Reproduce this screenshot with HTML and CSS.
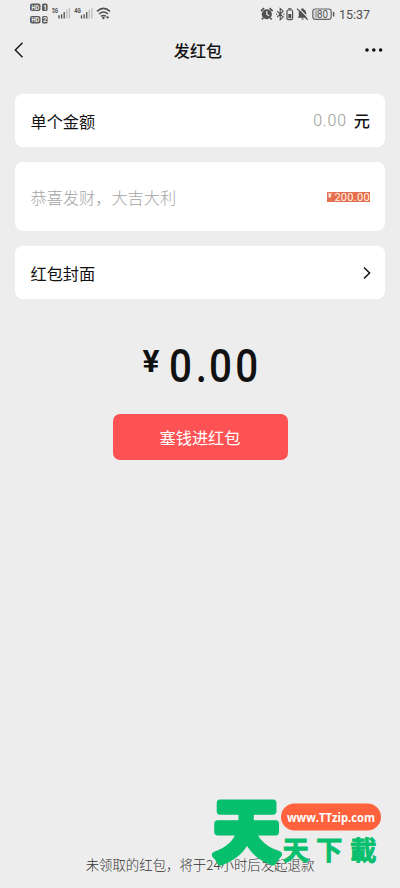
FILE: index.html
```html
<!DOCTYPE html>
<html lang="zh-CN">
<head>
<meta charset="utf-8">
<meta name="viewport" content="width=device-width, initial-scale=1">
<title>发红包</title>
<link rel="stylesheet" href="styles.css">
</head>
<body>
<div class="screen">
  <header class="status">
    <svg class="status-left" width="84" height="26" viewBox="0 0 84 26">
      <g fill="#5b5b5b">
        <rect x="0" y="3.4" width="10.5" height="7.6" rx="2"/><rect x="12" y="3.4" width="5.6" height="7.6" rx="1.6"/>
        <rect x="0" y="16" width="10.5" height="7.6" rx="2"/><rect x="12" y="16" width="5.6" height="7.6" rx="1.6"/>
      </g>
      <g class="hd">
        <text x="1.4" y="9.7" textLength="7.8" lengthAdjust="spacingAndGlyphs">HD</text><text x="13" y="9.7">1</text>
        <text x="1.4" y="22.3" textLength="7.8" lengthAdjust="spacingAndGlyphs">HD</text><text x="13" y="22.3">2</text>
      </g>
      <g class="net"><text x="22" y="12.6" textLength="6" lengthAdjust="spacingAndGlyphs">5G</text><text x="44.3" y="12.6" textLength="6.6" lengthAdjust="spacingAndGlyphs">4G</text></g>
      <g stroke="#505050" stroke-width="1.3">
        <path d="M29 18.5v-3.2M31.6 18.5v-4.3M34.2 18.5v-6.5M51.5 18.5v-3.2M54.1 18.5v-4.3M56.7 18.5v-6.5"/>
        <path stroke="#bdbdbd" d="M36.8 18.5v-9M39.4 18.5v-10.5M59.3 18.5v-9M61.9 18.5v-10.5"/>
      </g>
      <g fill="none" stroke="#505050" stroke-width="1.5">
        <path d="M67 11.4q6.5-6 13 0M69 14q4.5-4 9 0M71 16.4q2.5-2 5 0"/>
      </g>
      <circle cx="73.4" cy="18" r="1.2" fill="#505050"/><path d="M76 17.3l1.6-1.4 1.6 1.4-1.6 1.4z" fill="#505050"/>
    </svg>
    <div class="status-right">
      <svg width="76" height="18" viewBox="0 0 76 18">
        <circle cx="6.8" cy="9.2" r="5" fill="#505050"/><path d="M1 6.2l3-3M12.6 6.2l-3-3M3.2 13l-1.3 1.5M10.4 13l1.3 1.5" stroke="#505050" stroke-width="1.7"/><path d="M6.8 6v3.5l2.4 1.3" fill="none" stroke="#ededed" stroke-width="1.2"/>
        <path d="M17.2 6.2l6 5.8-3 2.8V3.4l3 2.8-6 5.8M16 9.1h1M23.5 9.1h1" fill="none" stroke="#505050" stroke-width="1.1"/>
        <rect x="27" y="5" width="5.6" height="9.6" rx="1.3" fill="none" stroke="#505050" stroke-width="1.2"/><path d="M28.2 3.8h3.2" stroke="#505050" stroke-width="1.2"/><path d="M28.3 9h3v4.2h-3z" fill="#505050"/>
        <path d="M37.5 12.8l1.3-1.6V8q0-3 2.6-3.7 0-1.1 1.1-1.1t1.1 1.1Q46.2 5 46.2 8v3.2l1.3 1.6zM41 13.5h3l-1.5 1.4z" fill="#505050"/><path d="M38.2 2.600l10.600 11" stroke="#ededed" stroke-width="1.2"/><path d="M37 3.600l10.800 11.200" stroke="#505050" stroke-width="1.2"/>
        <rect x="52.8" y="4" width="18.4" height="10.3" rx="2.5" fill="none" stroke="#626262" stroke-width="1.2"/><path d="M54.6 5.600h3v7.200h-3z" fill="#b0b0b0"/><path d="M73.6 7v4.500" stroke="#505050" stroke-width="1.4"/>
        <text class="battery" x="57" y="12.6" textLength="11" lengthAdjust="spacingAndGlyphs">80</text>
      </svg>
      <span class="time">15:37</span>
    </div>
  </header>
  <nav class="nav">
    <svg width="10" height="16" viewBox="0 0 10 16"><path d="M8.5 .8L1.3 8l7.2 7.2" fill="none" stroke="#151515" stroke-width="1.4"/></svg>
    <h1>发红包</h1>
    <svg width="18" height="6" viewBox="0 0 18 6" fill="#111"><circle cx="2" cy="3" r="1.8"/><circle cx="8.8" cy="3" r="1.8"/><circle cx="15.6" cy="3" r="1.8"/></svg>
  </nav>
  <main>
    <section class="card amount-row"><span>单个金额</span><span class="value"><span class="zero">0.00</span><span class="unit">元</span></span></section>
    <section class="card wish"><span>恭喜发财，大吉大利</span><span class="tag"><i>¥</i><span>200.00</span></span></section>
    <section class="card cover"><span>红包封面</span><svg width="8" height="14" viewBox="0 0 8 14"><path d="M1 1.5L6.600 7 1 12.5" fill="none" stroke="#111" stroke-width="1.5"/></svg></section>
    <svg class="total" width="120" height="60" viewBox="0 0 120 60">
      <text class="yen" x="2.5" y="36" textLength="17" lengthAdjust="spacingAndGlyphs">¥</text>
      <text class="sum" transform="translate(29 45.5) scale(.86 1)" x="0 31 46.500 77">0.00</text>
    </svg>
    <button class="send">塞钱进红包</button>
  </main>
  <footer>未领取的红包，将于24小时后发起退款</footer>
  <div class="watermark">
    <svg width="176" height="78" viewBox="0 0 176 78">
      <text class="mark-big" transform="translate(4.5 61) scale(.99 1)">天</text>
      <rect x="72" y="8.5" width="100" height="27" rx="13.5" fill="#ff623c"/>
      <text class="mark-url" x="78" y="26.5" textLength="88" lengthAdjust="spacingAndGlyphs">www.TTzip.com</text>
      <g class="mark-name"><text x="73.5" y="65">天</text><text x="107" y="65">下</text><text x="141" y="65">載</text></g>
    </svg>
  </div>
</div>
</body>
</html>
```
FILE: styles.css
```css
* { box-sizing: border-box; }
body { margin: 0; background: #ededed; font-family: "Noto Sans CJK SC", sans-serif; color: #111; }
.screen { position: relative; width: 400px; height: 888px; display: flex; flex-direction: column; overflow: hidden; }
.status { height: 28px; display: flex; justify-content: space-between; padding: 0 30px; }
.status-right { display: flex; align-items: flex-start; padding-top: 5px; }
.hd { font: bold 7px Roboto, sans-serif; fill: #ededed; }
.net { font: bold 6.5px Roboto, sans-serif; fill: #505050; }
.battery { font: 10px Roboto, sans-serif; fill: #505050; }
.time { font: 12.5px/19px Roboto, sans-serif; color: #505050; width: 31px; margin-left: 3px; white-space: nowrap; }
.nav { height: 44px; display: flex; align-items: center; justify-content: space-between; padding: 0 17px 0 14px; }
.nav h1 { margin: 0 0 0 7px; font-size: 16px; font-weight: 500; line-height: 24px; letter-spacing: .2px; }
main { padding: 22px 15px 0; display: flex; flex-direction: column; }
.card { background: #fff; border-radius: 8px; padding: 0 15px 0 15.5px; display: flex; align-items: center; justify-content: space-between; font-size: 16.2px; line-height: 24px; }
.amount-row { height: 53px; }
.value { display: flex; gap: 7px; }
.zero { font-family: Roboto, sans-serif; font-size: 16px; line-height: 26px; font-weight: 300; color: #999; letter-spacing: .8px; }
.unit { font-weight: 500; }
.wish { height: 69px; margin-top: 15px; color: #a4a4a4; font-weight: 300; }
.tag { width: 43px; height: 10px; background: #e4704f; color: #fff3e4; display: flex; justify-content: space-between; font: 11px/11px Roboto, sans-serif; letter-spacing: .3px; padding-left: 1px; }
.tag i { font: bold 7px/8px Roboto, sans-serif; letter-spacing: 0; }
.cover { height: 53px; margin-top: 15px; padding-right: 14px; }
.total { align-self: center; margin-top: 37px; font-family: Roboto, sans-serif; fill: #111; }
.yen { font-size: 31px; font-weight: 700; }
.sum { font-size: 47px; font-weight: 500; }
.send { align-self: center; width: 175px; height: 46px; margin-top: 18px; border: 0; border-radius: 7px; background: #fd5253; color: #fff; font: 16.2px/24px "Noto Sans CJK SC", sans-serif; padding: 0; }
footer { margin-top: auto; height: 36px; text-align: center; font-size: 13.4px; line-height: 24px; font-weight: 300; color: #333; }
.watermark { position: absolute; left: 209px; top: 795px; }
.watermark svg { display: block; overflow: visible; }
.mark-big { font: bold 67px "Noto Sans CJK TC", sans-serif; fill: #07bf6d; stroke: #07bf6d; stroke-width: 7px; stroke-linejoin: round; }
.mark-name { font: bold 26.5px "Noto Sans CJK TC", sans-serif; fill: #07bf6d; stroke: #07bf6d; stroke-width: .8px; stroke-linejoin: round; }
.mark-url { font: bold 11.8px "Open Sans", sans-serif; fill: #fff; }
```
